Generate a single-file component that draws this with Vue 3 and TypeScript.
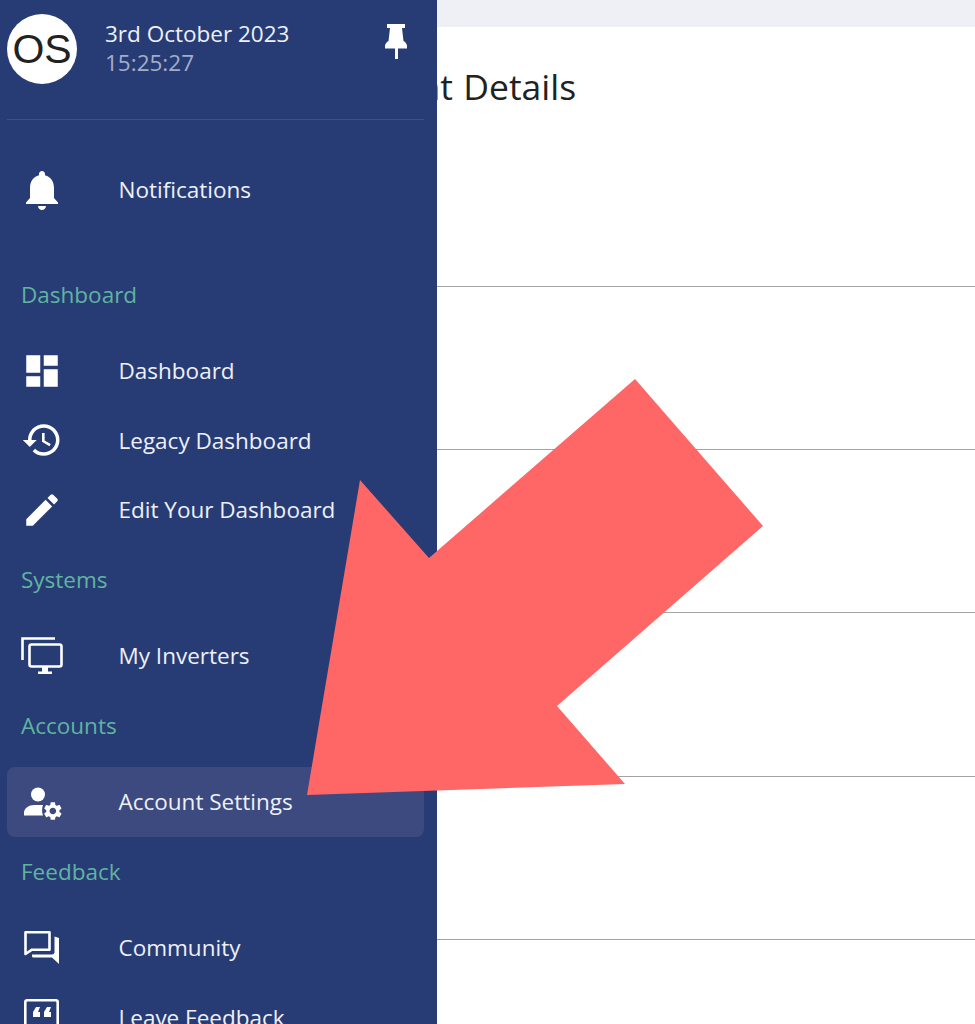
<script setup lang="ts">
interface NavItem {
  label: string
  icon: string
  active?: boolean
}

interface NavGroup {
  title: string
  items: NavItem[]
}

const groups: NavGroup[] = [
  {
    title: 'Dashboard',
    items: [
      { label: 'Dashboard', icon: 'dashboard' },
      { label: 'Legacy Dashboard', icon: 'history' },
      { label: 'Edit Your Dashboard', icon: 'edit' }
    ]
  },
  { title: 'Systems', items: [{ label: 'My Inverters', icon: 'screens' }] },
  { title: 'Accounts', items: [{ label: 'Account Settings', icon: 'account', active: true }] },
  {
    title: 'Feedback',
    items: [
      { label: 'Community', icon: 'community' },
      { label: 'Leave Feedback', icon: 'feedback' }
    ]
  }
]

const rows = [1, 2, 3, 4, 5]
</script>

<template>
  <div class="page">
    <main class="main">
      <div class="topbar"></div>
      <section class="card">
        <h1 class="card-title">Account Details</h1>
        <div v-for="row in rows" :key="row" class="row"></div>
      </section>
    </main>

    <aside class="sidebar">
      <header class="side-head">
        <div class="avatar">OS</div>
        <div class="when">
          <div class="date">3rd October 2023</div>
          <div class="time">15:25:27</div>
        </div>
        <svg class="pin" width="24" height="36" viewBox="0 0 24 36">
          <path d="M3 0h18v4h-3l1.500 13c1.600 1 3 2.300 3.500 4.500v3H14V35h-3V24.500H1v-3C1.500 19.300 3 18 4.500 17L6 4H3z" fill="#fff" />
        </svg>
      </header>

      <div class="nav-item first">
        <svg class="icon" viewBox="1.500 1.500 21 21">
          <path d="M12 22c1.100 0 2-.9 2-2h-4c0 1.100.89 2 2 2zm6-6v-5c0-3.070-1.640-5.640-4.500-6.320V4c0-.83-.67-1.500-1.500-1.500s-1.500.67-1.500 1.500v.68C7.630 5.360 6 7.920 6 11v5l-2 2.200V19h16v-.8l-2-2.200z" fill="#fff" />
        </svg>
        <span>Notifications</span>
      </div>

      <div v-for="group in groups" :key="group.title" class="group">
        <div class="group-title">{{ group.title }}</div>
        <div
          v-for="item in group.items"
          :key="item.label"
          class="nav-item"
          :class="{ active: item.active }"
        >
          <svg v-if="item.icon === 'dashboard'" class="icon" viewBox="0 0 24 24">
            <path d="M3 13h8V3H3v10zm0 8h8v-6H3v6zm10 0h8V11h-8v10zm0-18v6h8V3h-8z" fill="#fff" />
          </svg>
          <svg v-else-if="item.icon === 'history'" class="icon" viewBox="0 0 24 24">
            <path d="M13 3c-4.970 0-9 4.030-9 9H1l3.890 3.890.07.14L9 12H6c0-3.870 3.130-7 7-7s7 3.130 7 7-3.130 7-7 7c-1.930 0-3.680-.79-4.940-2.060l-1.420 1.420C8.270 19.990 10.510 21 13 21c4.970 0 9-4.030 9-9s-4.030-9-9-9zm-1 5v5l4.280 2.540.72-1.210-3.500-2.080V8H12z" fill="#fff" />
          </svg>
          <svg v-else-if="item.icon === 'edit'" class="icon" viewBox="0 0 24 24">
            <path d="M3 17.250V21h3.750L17.810 9.940l-3.750-3.750L3 17.250zM20.710 7.040c.39-.39.39-1.020 0-1.410l-2.340-2.340c-.39-.39-1.020-.39-1.410 0l-1.830 1.830 3.750 3.750 1.830-1.830z" fill="#fff" />
          </svg>
          <svg v-else-if="item.icon === 'screens'" class="icon" viewBox="0 0 42 42">
            <path d="M1.500 25V3.500H34" fill="none" stroke="#fff" stroke-width="2.600" />
            <rect x="8.500" y="9.500" width="32" height="22" rx="2" fill="none" stroke="#fff" stroke-width="2.600" />
            <path d="M21 32h6v4.500h4V39H17v-2.500h4z" fill="#fff" />
          </svg>
          <svg v-else-if="item.icon === 'account'" class="icon" viewBox="0 0 42 42">
            <circle cx="17" cy="13.500" r="7" fill="#fff" />
            <path d="M3 34.500v-3c0-4 5-7.500 10-7.500h9c-1.200 3-1.200 7.500 0 10.500z" fill="#fff" />
            <path transform="translate(20.800 19) scale(.92)" d="M19.140 12.940c.04-.3.06-.61.06-.94 0-.32-.02-.64-.07-.94l2.030-1.580c.18-.14.23-.41.12-.61l-1.920-3.320c-.12-.22-.37-.29-.59-.22l-2.390.96c-.5-.38-1.030-.7-1.620-.94l-.36-2.540c-.04-.24-.24-.41-.48-.41h-3.840c-.24 0-.43.17-.47.41l-.36 2.540c-.59.24-1.130.57-1.620.94l-2.390-.96c-.22-.08-.47 0-.59.22L2.740 8.870c-.12.21-.08.47.12.61l2.030 1.580c-.05.3-.09.63-.09.94s.02.64.07.94l-2.030 1.580c-.18.14-.23.41-.12.61l1.920 3.320c.12.22.37.29.59.22l2.390-.96c.5.38 1.030.7 1.620.94l.36 2.540c.05.24.24.41.48.41h3.840c.24 0 .44-.17.47-.41l.36-2.540c.59-.24 1.130-.56 1.620-.94l2.390.96c.22.08.47 0 .59-.22l1.920-3.320c.12-.22.07-.47-.12-.61l-2.010-1.580zM12 15.600c-1.980 0-3.600-1.620-3.600-3.600s1.620-3.600 3.600-3.600 3.600 1.620 3.600 3.600-1.620 3.600-3.600 3.600z" fill="#fff" />
          </svg>
          <svg v-else-if="item.icon === 'community'" class="icon" viewBox="0 0 42 42">
            <path d="M4.500 5.300h24v17.400H11L4.500 27z" fill="none" stroke="#fff" stroke-width="2.600" stroke-linejoin="round" />
            <path d="M33.500 9.500l4.500 1.500v26l-7-6.500H12.500c-1 0-1.500-.6-1.500-1.500v-1.500h20c1.500 0 2.500-1 2.500-2.500z" fill="#fff" />
          </svg>
          <svg v-else class="icon" viewBox="0 0 42 42">
            <rect x="4.300" y="4.300" width="32.400" height="36" rx="2" fill="none" stroke="#fff" stroke-width="2.600" />
            <path d="M12 21v-5l3-5h4l-2 5h2v5zm11 0v-5l3-5h4l-2 5h2v5z" fill="#fff" />
          </svg>
          <span>{{ item.label }}</span>
        </div>
      </div>
    </aside>

    <svg class="arrow" width="975" height="1024" viewBox="0 0 975 1024">
      <polygon points="635,379 763,526 557,706 625,784 307,795 360,480 429,558" fill="#ff6666" />
    </svg>
  </div>
</template>

<style scoped>
.page {
  position: relative;
  width: 975px;
  height: 1024px;
  overflow: hidden;
  font-family: "Open Sans", "Noto Sans", sans-serif;
  background: #fff;
}

.topbar {
  height: 27px;
  background: #eff0f5;
  box-shadow: 0 1px 2px rgba(0, 0, 0, 0.12);
}

.card {
  background: #fff;
}

.card-title {
  margin: 0;
  height: 96.5px;
  padding: 38px 0 0 319px;
  box-sizing: border-box;
  font-size: 35.5px;
  line-height: 42px;
  font-weight: 400;
  word-spacing: 1px;
  color: #222;
}

.row {
  height: 163.3px;
  box-sizing: border-box;
  border-bottom: 1px solid #a3a3a3;
}

.sidebar {
  position: absolute;
  top: 0;
  left: 0;
  bottom: 0;
  width: 437px;
  padding: 0 13px 0 7px;
  box-sizing: border-box;
  background: #273c75;
  overflow: hidden;
  color: #fff;
}

.side-head {
  display: flex;
  align-items: flex-start;
  height: 120px;
  padding-top: 14px;
  box-sizing: border-box;
  border-bottom: 1px solid #3d5087;
}

.avatar {
  flex: none;
  width: 70px;
  height: 70px;
  border-radius: 50%;
  background: #fff;
  color: #222;
  font-family: "Liberation Sans", Arial, sans-serif;
  font-size: 41px;
  line-height: 70px;
  text-align: center;
}

.when {
  flex: 1;
  margin-left: 28px;
  padding-top: 5px;
}

.date {
  font-size: 22.5px;
  line-height: 30px;
  color: #eef0f5;
}

.time {
  font-size: 22.5px;
  line-height: 27px;
  color: #a4adc8;
}

.pin {
  flex: none;
  margin: 10px 16px 0 0;
}

.nav-item {
  display: flex;
  align-items: center;
  height: 69.5px;
  padding-left: 14px;
  border-radius: 8px;
  font-size: 22.5px;
  color: #eef0f5;
}

.nav-item.first {
  margin-top: 35px;
  margin-bottom: 35px;
}

.nav-item.active {
  background: #3c4a7f;
}

.group-title {
  display: flex;
  align-items: center;
  height: 70px;
  margin-bottom: 6.5px;
  padding-left: 14px;
  padding-bottom: 1px;
  box-sizing: border-box;
  font-size: 22.5px;
  color: #60b4a0;
}

.icon {
  flex: none;
  width: 42px;
  height: 42px;
  margin-right: 55.5px;
  overflow: visible;
}

.arrow {
  position: absolute;
  top: 0;
  left: 0;
  pointer-events: none;
}
</style>
